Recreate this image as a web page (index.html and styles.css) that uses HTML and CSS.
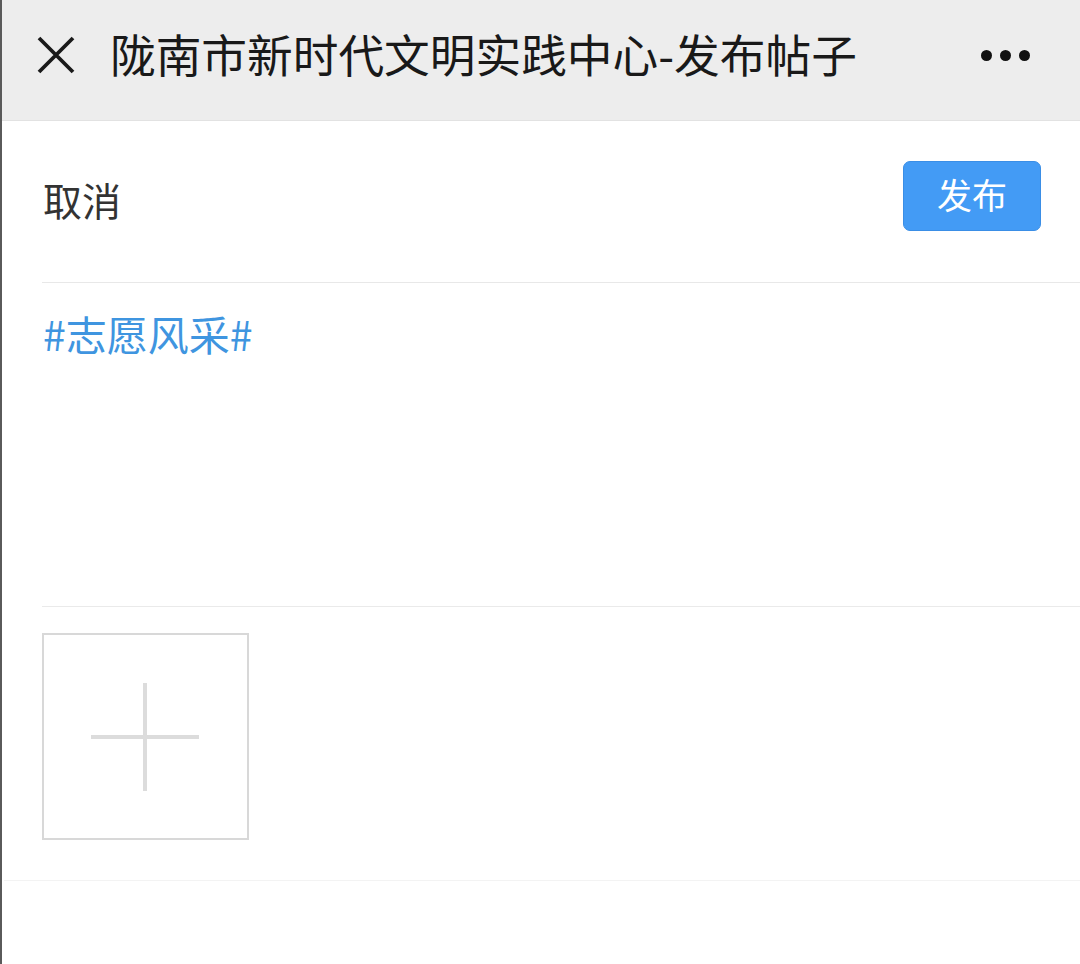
FILE: index.html
```html
<!DOCTYPE html>
<html lang="zh-CN">
<head>
<meta charset="utf-8">
<title>发布帖子</title>
<link rel="stylesheet" href="styles.css">
</head>
<body>
<div class="screen">
  <header class="navbar">
    <div class="nav-left">
      <svg class="close-icon" width="38" height="38" viewBox="0 0 38 38" aria-hidden="true">
        <path d="M2 2 L36 36 M36 2 L2 36" stroke="#1a1a1a" stroke-width="3.8" fill="none"/>
      </svg>
      <h1 class="nav-title">陇南市新时代文明实践中心-发布帖子</h1>
    </div>
    <div class="more" aria-label="更多">
      <span class="dot"></span><span class="dot"></span><span class="dot"></span>
    </div>
  </header>

  <main class="content">
    <div class="toolbar">
      <span class="cancel">取消</span>
      <button class="publish">发布</button>
    </div>
    <div class="editor">
      <span class="tag">#志愿风采#</span>
    </div>
    <div class="uploads">
      <div class="upload-box">
        <span class="plus-h"></span>
        <span class="plus-v"></span>
      </div>
    </div>
  </main>
</div>
</body>
</html>
```

FILE: styles.css
```css
html, body {
  margin: 0;
  padding: 0;
  background: #ffffff;
}

body {
  font-family: "Noto Sans CJK SC", "Noto Sans", sans-serif;
  width: 1080px;
  height: 964px;
  overflow: hidden;
}

.screen {
  height: 964px;
  border-left: 2px solid #5a5a5a;
  box-sizing: border-box;
  display: flex;
  flex-direction: column;
}

.navbar {
  height: 121px;
  box-sizing: border-box;
  background: #ededed;
  border-bottom: 1px solid #e2e2e2;
  display: flex;
  align-items: center;
  justify-content: space-between;
  padding: 0 50px 10px 35px;
}

.nav-left {
  display: flex;
  align-items: center;
}

.close-icon {
  display: block;
  margin-right: 35px;
}

.nav-title {
  margin: 0;
  font-size: 45.7px;
  font-weight: 400;
  color: #191919;
  line-height: 1;
  letter-spacing: 0;
  position: relative;
  top: -1px;
}

.more {
  display: flex;
  gap: 8px;
  align-items: center;
}

.dot {
  width: 11px;
  height: 11px;
  border-radius: 50%;
  background: #111;
}

.content {
  flex: 1;
  display: flex;
  flex-direction: column;
}

.toolbar {
  height: 162px;
  margin-left: 40px;
  box-sizing: border-box;
  border-bottom: 1px solid #e8e8e8;
  display: flex;
  align-items: center;
  justify-content: space-between;
  padding: 0 39px 0 1px;
}

.cancel {
  font-size: 39px;
  color: #333333;
  position: relative;
  top: -3px;
}

.publish {
  width: 138px;
  height: 70px;
  border: 1px solid #3a8ee6;
  border-radius: 7px;
  background: #439bf5;
  color: #ffffff;
  font-family: inherit;
  font-size: 35px;
  line-height: 1;
  padding: 0 0 4px;
  margin-top: -12px;
  cursor: pointer;
}

.editor {
  height: 324px;
  margin-left: 40px;
  box-sizing: border-box;
  border-bottom: 1px solid #eaeaea;
  padding: 26px 0 0 1px;
}

.tag {
  font-size: 41px;
  color: #3f95e0;
  line-height: 1.2;
}

.uploads {
  height: 274px;
  box-sizing: border-box;
  border-bottom: 1px solid #f3f3f3;
  padding: 26px 0 0 40px;
  margin-left: 2px;
}

.upload-box {
  width: 207px;
  height: 207px;
  box-sizing: border-box;
  border: 2px solid #d8d8d8;
  margin-left: -2px;
  position: relative;
}

.plus-h {
  position: absolute;
  left: 47px;
  top: 100px;
  width: 108px;
  height: 4px;
  background: #dcdcdc;
}

.plus-v {
  position: absolute;
  left: 99px;
  top: 48px;
  width: 4px;
  height: 108px;
  background: #dcdcdc;
}
```
